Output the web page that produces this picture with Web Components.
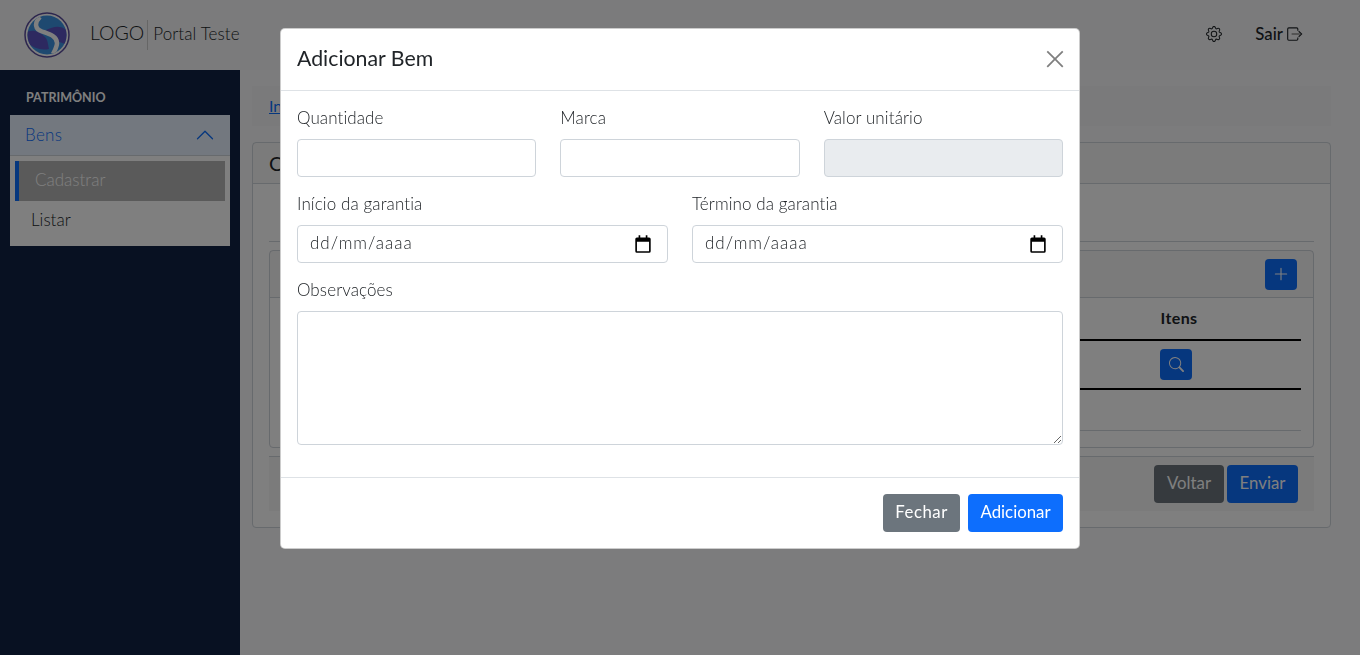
<!DOCTYPE html>
<html lang="pt-BR">
<head>
<meta charset="utf-8">
<title>Portal Teste</title>
<style>
    html, body { margin: 0; height: 100%; overflow: hidden; }
    body { font-family: Lato, "Open Sans", sans-serif; font-size: 16px; color: #212529; background: #fff; }
</style>
</head>
<body>
<portal-app></portal-app>
<script>
const ICONS = {
    gear: '<path d="M8 4.754a3.246 3.246 0 1 0 0 6.492 3.246 3.246 0 0 0 0-6.492zM5.754 8a2.246 2.246 0 1 1 4.492 0 2.246 2.246 0 0 1-4.492 0z"/><path d="M9.796 1.343c-.527-1.79-3.065-1.79-3.592 0l-.094.319a.873.873 0 0 1-1.255.52l-.292-.16c-1.64-.892-3.433.902-2.54 2.541l.159.292a.873.873 0 0 1-.52 1.255l-.319.094c-1.79.527-1.79 3.065 0 3.592l.319.094a.873.873 0 0 1 .52 1.255l-.16.292c-.892 1.64.901 3.434 2.541 2.54l.292-.159a.873.873 0 0 1 1.255.52l.094.319c.527 1.79 3.065 1.79 3.592 0l.094-.319a.873.873 0 0 1 1.255-.52l.292.16c1.64.893 3.434-.902 2.54-2.541l-.159-.292a.873.873 0 0 1 .52-1.255l.319-.094c1.79-.527 1.79-3.065 0-3.592l-.319-.094a.873.873 0 0 1-.52-1.255l.16-.292c.893-1.64-.902-3.433-2.541-2.54l-.292.159a.873.873 0 0 1-1.255-.52l-.094-.319zm-2.633.283c.246-.835 1.428-.835 1.674 0l.094.319a1.873 1.873 0 0 0 2.693 1.115l.291-.16c.764-.415 1.6.42 1.184 1.185l-.159.292a1.873 1.873 0 0 0 1.116 2.692l.318.094c.835.246.835 1.428 0 1.674l-.319.094a1.873 1.873 0 0 0-1.115 2.693l.16.291c.415.764-.42 1.6-1.185 1.184l-.291-.159a1.873 1.873 0 0 0-2.693 1.116l-.094.318c-.246.835-1.428.835-1.674 0l-.094-.319a1.873 1.873 0 0 0-2.692-1.115l-.292.16c-.764.415-1.6-.42-1.184-1.185l.159-.291A1.873 1.873 0 0 0 1.945 8.93l-.319-.094c-.835-.246-.835-1.428 0-1.674l.319-.094A1.873 1.873 0 0 0 3.06 4.377l-.16-.292c-.415-.764.42-1.6 1.185-1.184l.292.159a1.873 1.873 0 0 0 2.692-1.115l.094-.319z"/>',
    exit: '<path d="M2.5 2h7A1.5 1.5 0 0 1 11 3.5V5h-1V3.500a.5.5 0 0 0-.5-.5h-7a.5.500 0 0 0-.5.500v9a.5.5 0 0 0 .5.5h7a.5.5 0 0 0 .5-.5V11h1v1.500A1.500 1.500 0 0 1 9.500 14h-7A1.500 1.500 0 0 1 1 12.500v-9A1.500 1.500 0 0 1 2.500 2z"/><path fill="#6c6c6c" d="M5 7.500h7.300V8.500H5z"/><path d="M11.600 5.200l3 2.800-3 2.800-.7-.7L13.200 8l-2.300-2.100z"/>',
    search: '<path d="M11.742 10.344a6.500 6.500 0 1 0-1.397 1.398h-.001c.03.040.062.078.098.115l3.850 3.850a1 1 0 0 0 1.415-1.414l-3.850-3.850a1.007 1.007 0 0 0-.115-.1zM12 6.500a5.500 5.500 0 1 1-11 0 5.500 5.500 0 0 1 11 0z"/>',
    plus: '<path d="M8 2.500a.5.5 0 0 1 .5.5v4.500H13a.5.5 0 0 1 0 1H8.500V13a.5.5 0 0 1-1 0V8.500H3a.5.5 0 0 1 0-1h4.500V3a.5.5 0 0 1 .5-.5z"/>',
    chevron: '<path fill-rule="evenodd" d="M1.646 11.354a.5.5 0 0 1 0-.708l6-6a.5.5 0 0 1 .708 0l6 6a.5.5 0 0 1-.708.708L8 5.707l-5.646 5.647a.5.5 0 0 1-.708 0z"/>',
    close: '<path d="M2.300 1.300L8 7 13.700 1.300l1 1L9 8l5.700 5.700-1 1L8 9l-5.700 5.700-1-1L7 8 1.300 2.300z"/>'
};

class BiIcon extends HTMLElement {
    connectedCallback(){
        let size = this.getAttribute("size") || 16;
        this.attachShadow({mode:'open'});
        this.shadowRoot.innerHTML = `
        <style>:host { display: inline-flex; line-height: 0; } svg { fill: currentColor; }</style>
        <svg width="${size}" height="${size}" viewBox="0 0 16 16">${ICONS[this.getAttribute("name")]}</svg>`;
    }
}
customElements.define('bi-icon', BiIcon);

class UiButton extends HTMLElement {
    constructor(){
        super();
        this.attachShadow({mode:'open'});
        this.shadowRoot.innerHTML = `
        <style>
            :host { display: inline-flex; align-items: center; justify-content: center; height: 38px; padding: 0 12.500px 2px; box-sizing: border-box; border-radius: 4px; color: #fff; background: #0d6efd; font-size: 16.800px; }
            :host([kind="gray"]) { background: #6c757d; letter-spacing: .5px; width: 77px; }
            :host([kind="dark"]) { background: #6c757d; width: 70px; padding-bottom: 3px; }
            :host([kind="send"]) { padding-bottom: 3px; width: 71px; }
            :host([kind="icon"]) { width: 32px; height: 31px; padding: 0; }
        </style>
        <slot></slot>`;
    }
}
customElements.define('ui-button', UiButton);

class AppHeader extends HTMLElement {
    constructor(){
        super();
        this.attachShadow({mode:'open'});
        this.shadowRoot.innerHTML = `
        <style>
            :host { display: flex; align-items: center; height: 70px; background: #f6f7f8; padding: 0 56px 0 24px; color: #212529; }
            .mark { width: 46px; height: 46px; margin-bottom: 1px; }
            .logo { margin-left: 20px; font-size: 19.500px; font-weight: 300; padding-right: 3px; border-right: 1px solid #ccc; line-height: 26px; padding-bottom: 4px; }
            .name { margin-left: 5px; margin-bottom: 3px; font-size: 17px; letter-spacing: .1px; font-weight: 300; }
            .spacer { flex: 1; }
            .gear { margin-bottom: 2px; }
            .sair { display: flex; align-items: center; gap: 3px; margin-left: 33px; font-weight: 500; font-size: 16.800px; margin-bottom: 3px; }
        </style>
        <svg class="mark" viewBox="0 0 46 46">
            <defs><clipPath id="disc"><circle cx="23" cy="23" r="19.500"/></clipPath></defs>
            <circle cx="23" cy="23" r="22" fill="#fff" stroke="#5a4c9c" stroke-width="1.500"/>
            <g clip-path="url(#disc)">
                <rect width="46" height="46" fill="#3c92e0"/>
                <path d="M22 18C30 14 37 13 44 19V33C36 30 30 29 26 24z" fill="#5a52c0"/>
                <path d="M2 20C10 17 16 20 21 25C24 28 24 33 25 37C17 39 9 36 2 30z" fill="#5a52c0"/>
                <path d="M16 5C10 11 11 17 18 19.500C25 22 33 24 33 31C33 35 31 38 29 42" fill="none" stroke="#fff" stroke-width="4.500"/>
            </g>
        </svg>
        <span class="logo">LOGO</span>
        <span class="name">Portal Teste</span>
        <span class="spacer"></span>
        <bi-icon class="gear" name="gear"></bi-icon>
        <span class="sair">Sair <bi-icon name="exit" size="18"></bi-icon></span>`;
    }
}
customElements.define('app-header', AppHeader);

class SideBar extends HTMLElement {
    constructor(){
        super();
        this.attachShadow({mode:'open'});
        this.shadowRoot.innerHTML = `
        <style>
            :host { display: block; width: 240px; flex: none; background: #102345; padding-top: 19px; box-sizing: border-box; }
            .title { padding-left: 26px; height: 26px; line-height: 17px; font-size: 12.500px; font-weight: 700; color: #fff; }
            .group { margin: 0 10px; background: #fff; }
            .bens { display: flex; align-items: center; justify-content: space-between; height: 40px; padding: 0 15px; background: #e7f1ff; color: #0d6efd; border-bottom: 1px solid #ced4da; font-size: 17px; letter-spacing: .3px; font-weight: 300; }
            .bens span { margin-bottom: 2px; }
            .items { padding: 5px; }
            .item { height: 40px; line-height: 38px; font-size: 17px; font-weight: 300; box-sizing: border-box; padding-bottom: 2px; }
            .item.on { background: #b4b4b4; color: #fff; border-left: 4px solid #0d6efd; padding-left: 16px; }
            .item.off { padding-left: 16px; }
        </style>
        <div class="title">PATRIMÔNIO</div>
        <div class="group">
            <div class="bens"><span>Bens</span> <bi-icon name="chevron" size="20"></bi-icon></div>
            <div class="items">
                <div class="item on">Cadastrar</div>
                <div class="item off">Listar</div>
            </div>
        </div>`;
    }
}
customElements.define('side-bar', SideBar);

class BensPage extends HTMLElement {
    constructor(){
        super();
        this.attachShadow({mode:'open'});
        this.shadowRoot.innerHTML = `
        <style>
            :host { display: block; flex: 1; background: #f8f9fa; padding: 16px 29px 0 12px; }
            .crumb { height: 40px; box-sizing: border-box; background: #f4f5f6; padding: 0 17px 2px; display: flex; align-items: center; margin-bottom: 16px; }
            .crumb a { color: #0d6efd; text-decoration: underline; }
            .card { border: 1px solid #ced4da; border-radius: 4px; height: 386px; box-sizing: border-box; background: #fff; }
            .card > header { height: 40px; border-bottom: 1px solid #ced4da; background: rgba(0,0,0,.03); padding: 0 16px; display: flex; align-items: center; font-size: 20px; }
            .inner { margin: 0 16px; }
            .rule { height: 57px; border-bottom: 1px solid #ced4da; margin-bottom: 8px; }
            .box { border: 1px solid #ced4da; border-radius: 4px; height: 198px; box-sizing: border-box; }
            .box > header { height: 47px; box-sizing: border-box; border-bottom: 1px solid #ced4da; background: rgba(0,0,0,.03); display: flex; align-items: center; justify-content: flex-end; padding-right: 16px; }
            .head { margin: 0 12px; height: 39px; padding-bottom: 2px; border-bottom: 2px solid #000; display: grid; grid-template-columns: 1fr 64px; align-items: center; padding-right: 90px; font-weight: 700; letter-spacing: .4px; }
            .head span { grid-column: 2; text-align: center; }
            .cell { margin: 0 12px; height: 47px; border-bottom: 2px solid #000; display: flex; align-items: center; justify-content: flex-end; padding-right: 109px; }
            .tail { margin: 0 12px; height: 40px; border-bottom: 1px solid #ced4da; }
            .foot { margin-top: 8px; height: 55px; background: rgba(0,0,0,.03); border-top: 1px solid #ced4da; box-sizing: border-box; display: flex; align-items: flex-start; padding-top: 8px; justify-content: flex-end; gap: 3px; padding-right: 16px; }
        </style>
        <div class="crumb"><a>Início</a></div>
        <div class="card">
            <header>Cadastrar Bem</header>
            <div class="inner">
                <div class="rule"></div>
                <div class="box">
                    <header><ui-button kind="icon"><bi-icon name="plus" size="18"></bi-icon></ui-button></header>
                    <div class="head"><span>Itens</span></div>
                    <div class="cell"><ui-button kind="icon"><bi-icon name="search" size="15"></bi-icon></ui-button></div>
                    <div class="tail"></div>
                </div>
                <div class="foot">
                    <ui-button kind="dark">Voltar</ui-button>
                    <ui-button kind="send">Enviar</ui-button>
                </div>
            </div>
        </div>`;
    }
}
customElements.define('bens-page', BensPage);

class FormField extends HTMLElement {
    constructor(){
        super();
        this.attachShadow({mode:'open'});
    }
    connectedCallback(){
        let type = this.getAttribute("type");
        let control = '<input class="ctl">';
        if(type == "disabled") control = '<input class="ctl" disabled>';
        if(type == "date") control = `<div class="ctl date"><span>dd/mm/aaaa</span>
            <svg width="22" height="22" viewBox="0 0 20 20"><path d="M6 2h1.500v2h5V2H14v2h1.500A1.500 1.500 0 0 1 17 5.500v11a1.500 1.500 0 0 1-1.500 1.500h-11A1.500 1.500 0 0 1 3 16.500v-11A1.500 1.500 0 0 1 4.500 4H6zM4.500 8v8.500h11V8z"/></svg></div>`;
        if(type == "area") control = '<textarea class="ctl"></textarea>';
        this.shadowRoot.innerHTML = `
        <style>
            :host { display: block; color: #212529; font-size: 17px; }
            label { display: block; height: 36px; line-height: 22px; box-sizing: border-box; padding-top: 4px; font-weight: 300; letter-spacing: .1px; }
            .ctl { display: block; width: 100%; height: 38px; box-sizing: border-box; border: 1px solid #ced4da; border-radius: 4px; background: #fff; margin: 0; padding: 6px 12px; font: inherit; }
            .ctl:disabled { background: #e9ecef; }
            textarea.ctl { height: 134px; resize: vertical; }
            .date { display: flex; align-items: center; justify-content: space-between; padding: 0 13px 0 12px; font-weight: 300; letter-spacing: 1px; }
            .date span { margin-bottom: 2px; }
            .date svg { flex: none; }
        </style>
        <label>${this.getAttribute("label")}</label>
        ${control}`;
    }
}
customElements.define('form-field', FormField);

class AddModal extends HTMLElement {
    constructor(){
        super();
        this.attachShadow({mode:'open'});
        this.shadowRoot.innerHTML = `
        <style>
            :host { position: fixed; inset: 0; background: rgba(0,0,0,.5); display: flex; justify-content: center; align-items: flex-start; padding-top: 27.500px; box-sizing: border-box; }
            .dialog { width: 800px; box-sizing: border-box; background: #fff; border: 1px solid rgba(0,0,0,.2); border-radius: 5px; }
            header { height: 62px; box-sizing: border-box; padding: 0 16px 2px; display: flex; align-items: center; justify-content: space-between; border-bottom: 1px solid #dee2e6; }
            h5 { margin: 0 0 1px; font-size: 21.300px; font-weight: 400; color: #212529; }
            .close { color: #7f7f7f; margin: 2px -2px 0 0; }
            .body { padding: 12px 16px 32px; height: 386px; box-sizing: border-box; display: flex; flex-direction: column; gap: 12px; }
            .row { display: grid; gap: 24px; }
            .three { grid-template-columns: 1fr 1fr 1fr; }
            .two { grid-template-columns: 1fr 1fr; }
            footer { height: 71px; box-sizing: border-box; border-top: 1px solid #dee2e6; display: flex; align-items: center; justify-content: flex-end; gap: 8px; padding: 0 16px; }
        </style>
        <div class="dialog">
            <header><h5>Adicionar Bem</h5><bi-icon class="close" name="close" size="20"></bi-icon></header>
            <div class="body">
                <div class="row three">
                    <form-field label="Quantidade"></form-field>
                    <form-field label="Marca"></form-field>
                    <form-field label="Valor unitário" type="disabled"></form-field>
                </div>
                <div class="row two">
                    <form-field label="Início da garantia" type="date"></form-field>
                    <form-field label="Término da garantia" type="date"></form-field>
                </div>
                <form-field label="Observações" type="area"></form-field>
            </div>
            <footer>
                <ui-button kind="gray">Fechar</ui-button>
                <ui-button>Adicionar</ui-button>
            </footer>
        </div>`;
    }
}
customElements.define('add-modal', AddModal);

class PortalApp extends HTMLElement {
    constructor(){
        super();
        this.attachShadow({mode:'open'});
        this.shadowRoot.innerHTML = `
        <style>
            :host { display: flex; flex-direction: column; height: 100vh; }
            .main { flex: 1; display: flex; min-height: 0; }
        </style>
        <app-header></app-header>
        <div class="main"><side-bar></side-bar><bens-page></bens-page></div>
        <add-modal></add-modal>`;
    }
}
customElements.define('portal-app', PortalApp);
</script>
</body>
</html>
